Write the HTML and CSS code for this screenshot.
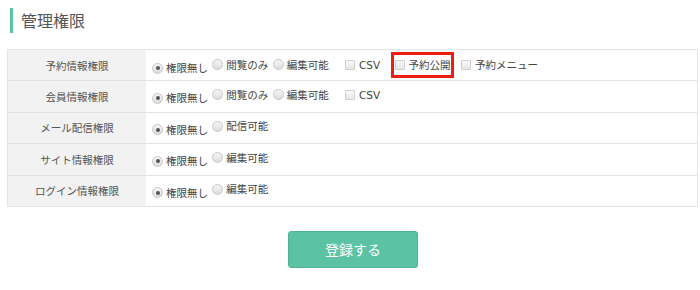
FILE: index.html
```html
<!DOCTYPE html>
<html lang="ja">
<head>
  <meta charset="UTF-8">
  <title>管理権限</title>
  <link rel="stylesheet" href="styles.css">
</head>
<body>
  <h2 class="section-title">管理権限</h2>

  <table class="perm-table">
    <tr>
      <th>予約情報権限</th>
      <td>
        <label class="opt"><span class="radio checked"></span>権限無し</label>
        <label class="opt"><span class="radio"></span>閲覧のみ</label>
        <label class="opt"><span class="radio"></span>編集可能</label>
        <label class="opt check first-check"><span class="box"></span>CSV</label>
        <label class="opt check marked"><span class="box"></span>予約公開</label>
        <label class="opt check"><span class="box"></span>予約メニュー</label>
      </td>
    </tr>
    <tr>
      <th>会員情報権限</th>
      <td>
        <label class="opt"><span class="radio checked"></span>権限無し</label>
        <label class="opt"><span class="radio"></span>閲覧のみ</label>
        <label class="opt"><span class="radio"></span>編集可能</label>
        <label class="opt check first-check"><span class="box"></span>CSV</label>
      </td>
    </tr>
    <tr>
      <th>メール配信権限</th>
      <td>
        <label class="opt"><span class="radio checked"></span>権限無し</label>
        <label class="opt"><span class="radio"></span>配信可能</label>
      </td>
    </tr>
    <tr>
      <th>サイト情報権限</th>
      <td>
        <label class="opt"><span class="radio checked"></span>権限無し</label>
        <label class="opt"><span class="radio"></span>編集可能</label>
      </td>
    </tr>
    <tr>
      <th>ログイン情報権限</th>
      <td>
        <label class="opt"><span class="radio checked"></span>権限無し</label>
        <label class="opt"><span class="radio"></span>編集可能</label>
      </td>
    </tr>
  </table>

  <div class="actions">
    <button type="button" class="btn-submit">登録する</button>
  </div>
</body>
</html>
```

FILE: styles.css
```css
body {
  margin: 0;
  font-family: "Noto Sans CJK JP", "Noto Sans", sans-serif;
  color: #555;
  background: #fff;
}

.section-title {
  margin: 8px 0 0 10px;
  padding-left: 8px;
  border-left: 3px solid #5cc4a2;
  font-size: 16px;
  font-weight: normal;
  line-height: 25px;
  color: #555;
}

.perm-table {
  margin: 16px 0 0 7px;
  width: 691px;
  border-collapse: collapse;
  border: 1px solid #e4e4e4;
  font-size: 10.5px;
}

.perm-table th,
.perm-table td {
  height: 30.4px;
  padding: 0;
  border-top: 1px solid #e4e4e4;
  vertical-align: middle;
}

.perm-table th {
  width: 138px;
  background: #f2f2f2;
  font-weight: normal;
  text-align: center;
  color: #555;
}

.perm-table td {
  padding-left: 6px;
  white-space: nowrap;
  font-family: "DejaVu Sans", "Noto Sans CJK JP", sans-serif;
  font-size: 10.5px;
}

.opt {
  display: inline-flex;
  align-items: center;
  margin-right: 1px;
  line-height: 14px;
  color: #444;
}

.radio {
  width: 9px;
  height: 9px;
  margin-right: 3px;
  border: 1px solid #c8c8c8;
  border-radius: 50%;
  background: linear-gradient(#f7f7f7, #dcdcdc);
  display: inline-flex;
  align-items: center;
  justify-content: center;
}

.radio.checked::after {
  content: "";
  width: 4px;
  height: 4px;
  border-radius: 50%;
  background: #555;
}

.check {
  margin-right: 10px;
}

.first-check {
  margin-left: 12px;
}

.box {
  width: 8px;
  height: 8px;
  margin-right: 4px;
  border: 1px solid #cfcfcf;
  border-radius: 1px;
  background: linear-gradient(#fafafa, #e6e6e6);
}

.marked {
  padding: 3px 0 3px 1px;
  margin-right: 7px;
  outline: 3px solid #ee1c12;
}

.actions {
  text-align: center;
  padding-left: 6px;
  margin-top: 24px;
}

.btn-submit {
  width: 130px;
  height: 37px;
  background: #5bc3a4;
  border: 1px solid #4fb393;
  border-radius: 3px;
  color: #fff;
  font-family: "Noto Sans CJK JP", sans-serif;
  font-size: 14px;
  cursor: pointer;
}
```
